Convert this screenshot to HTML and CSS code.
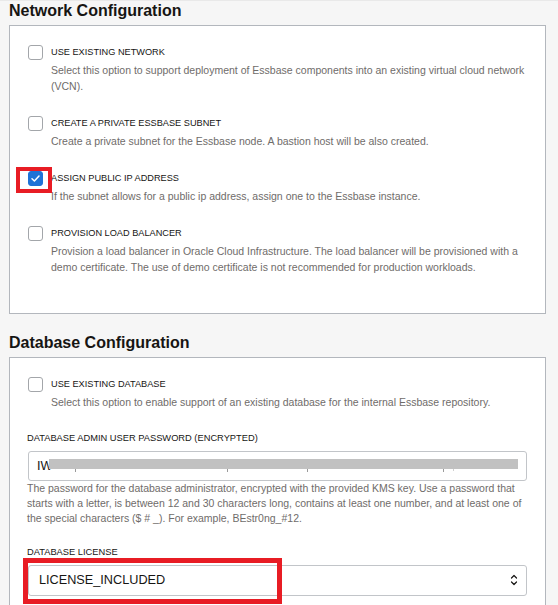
FILE: index.html
```html
<!DOCTYPE html>
<html lang="en">
<head>
<meta charset="utf-8">
<title>Configuration</title>
<link rel="stylesheet" href="styles.css">
</head>
<body>
<div class="page">
  <h2 class="section-title">Network Configuration</h2>
  <div class="panel panel-network">
    <div class="option">
      <span class="check"></span>
      <div class="option-body">
        <div class="option-label">USE EXISTING NETWORK</div>
        <div class="option-desc">Select this option to support deployment of Essbase components into an existing virtual cloud network (VCN).</div>
      </div>
    </div>
    <div class="option">
      <span class="check"></span>
      <div class="option-body">
        <div class="option-label">CREATE A PRIVATE ESSBASE SUBNET</div>
        <div class="option-desc">Create a private subnet for the Essbase node. A bastion host will be also created.</div>
      </div>
    </div>
    <div class="option">
      <span class="check checked">
        <svg viewBox="0 0 15 15" width="15" height="15"><path d="M4 7.8 L6.4 10 L11 5" fill="none" stroke="#fff" stroke-width="1.5" stroke-linecap="round" stroke-linejoin="round"/></svg>
      </span>
      <div class="option-body">
        <div class="option-label">ASSIGN PUBLIC IP ADDRESS</div>
        <div class="option-desc">If the subnet allows for a public ip address, assign one to the Essbase instance.</div>
      </div>
    </div>
    <div class="option">
      <span class="check"></span>
      <div class="option-body">
        <div class="option-label">PROVISION LOAD BALANCER</div>
        <div class="option-desc">Provision a load balancer in Oracle Cloud Infrastructure. The load balancer will be provisioned with a demo certificate. The use of demo certificate is not recommended for production workloads.</div>
      </div>
    </div>
    <div class="mark mark-check"></div>
  </div>

  <h2 class="section-title">Database Configuration</h2>
  <div class="panel panel-db">
    <div class="option">
      <span class="check"></span>
      <div class="option-body">
        <div class="option-label">USE EXISTING DATABASE</div>
        <div class="option-desc">Select this option to enable support of an existing database for the internal Essbase repository.</div>
      </div>
    </div>

    <div class="field">
      <div class="field-label">DATABASE ADMIN USER PASSWORD (ENCRYPTED)</div>
      <div class="input">
        <span class="input-text">IW</span>
        <div class="redact">
          <span class="tick t1"></span>
          <span class="tick t2"></span>
          <span class="tick t3"></span>
          <span class="tick t4"></span>
          <span class="tick t5"></span>
        </div>
      </div>
      <div class="field-help">The password for the database administrator, encrypted with the provided KMS key. Use a password that starts with a letter, is between 12 and 30 characters long, contains at least one number, and at least one of the special characters ($ # _). For example, BEstr0ng_#12.</div>
    </div>

    <div class="field field-license">
      <div class="field-label">DATABASE LICENSE</div>
      <div class="select">
        <span class="select-text">LICENSE_INCLUDED</span>
        <svg class="select-arrows" viewBox="0 0 8 14" width="8" height="14"><path d="M1.5 5 L4 2.5 L6.5 5 M1.5 9 L4 11.5 L6.5 9" fill="none" stroke="#161513" stroke-width="1.2" stroke-linecap="round" stroke-linejoin="round"/></svg>
      </div>
    </div>
    <div class="mark mark-select"></div>
  </div>
</div>
</body>
</html>
```

FILE: styles.css
```css
html, body {
  margin: 0;
  padding: 0;
}
body {
  background: #f6f6f6;
  font-family: "Liberation Sans", Arial, sans-serif;
  color: #161513;
  border-top: 1px solid #e9e9e9;
  box-sizing: border-box;
  height: 605px;
  overflow: hidden;
}
.page {
  padding: 0 12px 0 9px;
}
.section-title {
  margin: 0;
  font-size: 16px;
  line-height: 20px;
  font-weight: bold;
  color: #161513;
}
.panel {
  position: relative;
  background: #fff;
  border: 1px solid #b3b7bd;
  margin-top: 4px;
  padding: 19px 18px 38px 18px;
}
.panel-network {
  height: 289px;
  box-sizing: border-box;
  margin-bottom: 19px;
}
.panel-db {
  height: 249px;
  box-sizing: border-box;
  border-bottom: 0;
  padding-bottom: 0;
}
.option {
  display: grid;
  grid-template-columns: 15px 1fr;
  column-gap: 8px;
  margin-bottom: 22.5px;
}
.option:last-of-type {
  margin-bottom: 0;
}
.check {
  width: 15px;
  height: 15px;
  box-sizing: border-box;
  border: 1px solid #a3a6aa;
  border-radius: 3px;
  background: #fff;
  display: block;
}
.check.checked {
  background: #1f72d6;
  border-color: #1f72d6;
}
.check.checked svg {
  display: block;
  margin: -1px;
}
.option-label {
  font-size: 9.2px;
  line-height: 15px;
  color: #161513;
  white-space: nowrap;
}
.option-desc {
  grid-column: 1 / 3;
  padding-left: 23px;
  margin-top: 1.5px;
  font-size: 10.5px;
  line-height: 16px;
  color: #6f6c6a;
}
.option-body {
  display: contents;
}
.panel-db .option {
  margin-bottom: 0;
}
.field {
  margin-top: 21px;
}
.field-label {
  font-size: 9.3px;
  line-height: 14px;
  color: #161513;
  margin-left: -1px;
}
.input {
  position: relative;
  margin-top: 6px;
  height: 30px;
  box-sizing: border-box;
  border: 1px solid #c2c5c9;
  border-radius: 3px;
  display: flex;
  align-items: center;
  padding-left: 8px;
}
.input-text {
  font-size: 12.7px;
  color: #161513;
}
.redact {
  position: absolute;
  left: 20px;
  top: 7px;
  width: 469px;
  height: 10px;
  background: #c1c1c1;
}
.tick {
  position: absolute;
  top: 10px;
  width: 1px;
  height: 3px;
  background: #9a9a9a;
}
.t1 { left: 26px; }
.t2 { left: 178px; }
.t3 { left: 258px; }
.t4 { left: 394px; }
.t5 { left: 404px; height: 2px; background: #cfcfcf; }
.field-help {
  font-size: 10.5px;
  line-height: 15px;
  color: #6f6c6a;
  margin-top: 0.5px;
  margin-left: -1px;
}
.field-license {
  margin-top: 18.5px;
}
.select {
  margin-top: 6px;
  height: 31px;
  box-sizing: border-box;
  border: 1px solid #c2c5c9;
  border-radius: 3px;
  display: flex;
  align-items: center;
  justify-content: space-between;
  padding: 0 8px 0 10px;
}
.select-text {
  font-size: 12.7px;
  color: #161513;
}
.select-arrows {
  display: block;
}
.mark {
  position: absolute;
  border: 4px solid #e81c24;
  box-sizing: border-box;
}
.mark-check {
  left: 6px;
  top: 141px;
  width: 36px;
  height: 26px;
}
.mark-select {
  left: 13px;
  top: 200px;
  width: 259px;
  height: 46px;
  border-width: 5px;
}
```
